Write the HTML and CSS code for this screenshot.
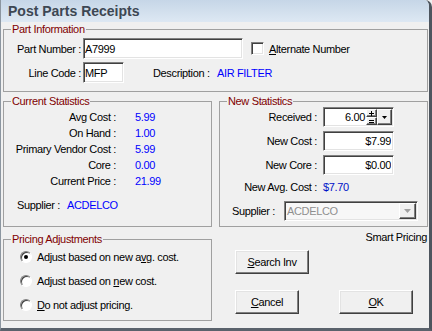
FILE: index.html
```html
<!DOCTYPE html>
<html lang="en">
<head>
    <meta charset="UTF-8">
    <title>Post Parts Receipts</title>
    <link rel="stylesheet" href="styles.css">
</head>
<body>
    <div class="window">
        <div class="titlebar">Post Parts Receipts</div>

        <div class="client">
            <!-- Part Information -->
            <fieldset class="group group-wide">
                <legend>Part Information</legend>
                <div class="part-row">
                    <span class="part-label">Part Number :</span>
                    <input class="field field-part" type="text" value="A7999">
                    <span class="checkbox"></span>
                    <span class="check-text"><u>A</u>lternate Number</span>
                </div>
                <div class="part-row part-row-2">
                    <span class="part-label">Line Code :</span>
                    <input class="field field-line" type="text" value="MFP">
                    <span class="desc-label">Description :</span>
                    <span class="value">AIR FILTER</span>
                </div>
            </fieldset>

            <!-- Current Statistics -->
            <fieldset class="group">
                <legend>Current Statistics</legend>
                <div class="stats">
                    <span class="stat-label">Avg Cost :</span><span class="value">5.99</span>
                    <span class="stat-label">On Hand :</span><span class="value">1.00</span>
                    <span class="stat-label">Primary Vendor Cost :</span><span class="value">5.99</span>
                    <span class="stat-label">Core :</span><span class="value">0.00</span>
                    <span class="stat-label">Current Price :</span><span class="value">21.99</span>
                </div>
                <div class="cur-supplier">
                    <span class="cur-supplier-label">Supplier :</span>
                    <span class="value">ACDELCO</span>
                </div>
            </fieldset>

            <!-- New Statistics -->
            <fieldset class="group">
                <legend>New Statistics</legend>
                <div class="new-row">
                    <span class="new-label">Received :</span>
                    <div class="spin-box">
                        <span class="spin-text">6.00</span>
                        <div class="spin-buttons">
                            <span class="spin-btn">
                                <svg width="5" height="5" viewBox="0 0 5 5"><path d="M2 0h1v2h2v1H3v2H2V3H0V2h2z" fill="#000"/></svg>
                            </span>
                            <span class="spin-btn">
                                <svg width="5" height="3" viewBox="0 0 5 3"><path d="M0 0h5v1H0zM0 2h5v1H0z" fill="#000"/></svg>
                            </span>
                        </div>
                        <span class="drop-btn">
                            <svg width="5" height="3" viewBox="0 0 5 3"><path d="M0 0h5L2.5 3z" fill="#000"/></svg>
                        </span>
                    </div>
                </div>
                <div class="new-row">
                    <span class="new-label">New Cost :</span>
                    <input class="field field-money" type="text" value="$7.99">
                </div>
                <div class="new-row">
                    <span class="new-label">New Core :</span>
                    <input class="field field-money" type="text" value="$0.00">
                </div>
                <div class="new-row new-row-avg">
                    <span class="new-label">New Avg. Cost :</span>
                    <span class="value value-dark">$7.70</span>
                </div>
                <div class="new-supplier">
                    <span class="new-supplier-label">Supplier :</span>
                    <div class="combo">
                        <span class="combo-text">ACDELCO</span>
                        <span class="drop-btn drop-btn-off">
                            <svg width="7" height="4" viewBox="0 0 7 4"><path d="M0 0h7L3.5 4z" fill="#a0a0a0"/></svg>
                        </span>
                    </div>
                </div>
            </fieldset>

            <!-- Pricing Adjustments -->
            <fieldset class="group group-pricing">
                <legend>Pricing Adjustments</legend>
                <div class="radio-list">
                    <div class="radio-row"><span class="radio radio-on"></span><span>Adjust based on new a<u>v</u>g. cost.</span></div>
                    <div class="radio-row"><span class="radio"></span><span>Adjust based on <u>n</u>ew cost.</span></div>
                    <div class="radio-row"><span class="radio"></span><span><u>D</u>o not adjust pricing.</span></div>
                </div>
            </fieldset>

            <!-- Buttons -->
            <div class="actions">
                <div class="smart">Smart Pricing</div>
                <button class="btn btn-search"><u>S</u>earch Inv</button>
                <div class="btn-row">
                    <button class="btn btn-cancel"><u>C</u>ancel</button>
                    <button class="btn btn-ok"><u>O</u>K</button>
                </div>
            </div>
        </div>
    </div>
</body>
</html>
```

FILE: styles.css
```css
body {
    margin: 0;
    font-family: "Liberation Sans", Arial, sans-serif;
    font-size: 11px;
    letter-spacing: -0.35px;
    color: #000;
    background: #f0f0f0;
}

/* Window frame */
.window {
    width: 432px;
    height: 331px;
    box-sizing: border-box;
    border-left: 1px solid #8c96a0;
    border-right: 3px solid #4d555e;
    border-bottom: 3px solid #5a626c;
    border-top-right-radius: 7px;
    background: #f0f0f0;
    overflow: hidden;
}

.titlebar {
    height: 22px;
    padding-left: 7px;
    line-height: 23px;
    font-size: 14px;
    font-weight: bold;
    letter-spacing: 0;
    color: #3d4753;
    background: linear-gradient(to bottom, #c6d6e7, #dde8f3);
}

.client {
    display: grid;
    grid-template-columns: 209px 209px;
    column-gap: 7px;
    padding: 1px 0 0 2px;
}

/* Group boxes */
.group {
    margin: 0;
    padding: 0;
    min-width: 0;
    border: 1px solid #a0a0a0;
}

.group legend {
    margin-left: 7px;
    padding: 0 1px;
    line-height: 12px;
    color: #800000;
}

.group-wide {
    grid-column: 1 / 3;
    padding: 3px 0 8px 0;
    margin-bottom: 3px;
}

.value {
    color: #0000ff;
}

.value-dark {
    color: #0010c8;
}

/* Sunken edit fields */
.field {
    box-sizing: border-box;
    height: 21px;
    margin: 0;
    padding: 0 1px;
    font-family: inherit;
    font-size: 11px;
    letter-spacing: -0.35px;
    color: #000;
    background: #fff;
    border: 1px solid;
    border-color: #808080 #fff #fff #808080;
    box-shadow: inset 1px 1px 0 #404040, inset -1px -1px 0 #e3e3e3;
    outline: none;
}

/* Part information rows */
.part-row {
    display: flex;
    align-items: center;
}

.part-row-2 {
    margin-top: 3px;
}

.part-label {
    width: 77px;
    margin-right: 2px;
    text-align: right;
}

.field-part {
    width: 160px;
}

.field-line {
    width: 41px;
}

.checkbox {
    box-sizing: border-box;
    width: 13px;
    height: 13px;
    margin-left: 8px;
    background: #fff;
    border: 1px solid;
    border-color: #808080 #fff #fff #808080;
    box-shadow: inset 1px 1px 0 #404040, inset -1px -1px 0 #e3e3e3;
}

.check-text {
    margin-left: 5px;
}

.desc-label {
    width: 64px;
    margin-left: 29px;
}

/* Current statistics */
.stats {
    display: grid;
    grid-template-columns: 112px auto;
    column-gap: 19px;
    padding-top: 2px;
    line-height: 16px;
}

.stat-label {
    text-align: right;
}

.cur-supplier {
    display: flex;
    margin-top: 8px;
    padding: 0 0 13px 13px;
    line-height: 16px;
}

.cur-supplier-label {
    width: 50px;
}

/* New statistics */
.new-row {
    display: flex;
    align-items: center;
    height: 20px;
    margin-bottom: 4px;
}

.new-row-avg {
    height: 16px;
    margin: 2px 0 6px 0;
}

.new-label {
    width: 97px;
    margin-right: 6px;
    text-align: right;
}

.field-money {
    width: 71px;
    height: 20px;
    padding-right: 2px;
    text-align: right;
}

.spin-box {
    box-sizing: border-box;
    display: flex;
    width: 71px;
    height: 20px;
    background: #fff;
    border: 1px solid;
    border-color: #808080 #fff #fff #808080;
    box-shadow: inset 1px 1px 0 #404040, inset -1px -1px 0 #e3e3e3;
    padding: 1px;
}

.spin-text {
    flex: 1;
    padding-right: 1px;
    text-align: right;
    line-height: 17px;
}

.spin-buttons {
    display: flex;
    flex-direction: column;
    width: 11px;
}

.spin-btn,
.drop-btn {
    box-sizing: border-box;
    display: flex;
    align-items: center;
    justify-content: center;
    background: #f0f0f0;
    border: 1px solid;
    border-color: #fff #404040 #404040 #fff;
    box-shadow: inset -1px -1px 0 #808080;
}

.spin-btn {
    height: 8px;
}

.drop-btn {
    width: 15px;
}

.drop-btn-off {
    width: 17px;
}

.new-supplier {
    display: flex;
    align-items: center;
    padding: 0 0 4px 12px;
}

.new-supplier-label {
    width: 52px;
}

.combo {
    box-sizing: border-box;
    display: flex;
    width: 134px;
    height: 20px;
    padding: 1px;
    background: #f7f7f7;
    border: 1px solid;
    border-color: #808080 #fff #fff #808080;
    box-shadow: inset 1px 1px 0 #404040, inset -1px -1px 0 #e3e3e3;
}

.combo-text {
    flex: 1;
    padding-left: 1px;
    line-height: 17px;
    color: #8f8f8f;
}

/* Pricing adjustments */
.group-pricing {
    margin-top: 6px;
    height: 88px;
    box-sizing: border-box;
}

.radio-list {
    padding: 4px 0 0 16px;
}

.radio-row {
    display: flex;
    align-items: center;
    height: 16px;
    margin-bottom: 8px;
}

.radio {
    box-sizing: border-box;
    position: relative;
    width: 12px;
    height: 12px;
    margin-right: 5px;
    border-radius: 50%;
    background: #fff;
    border: 1px solid;
    border-color: #808080 #fff #fff #808080;
    box-shadow: inset 1px 1px 0 #404040;
}

.radio-on::after {
    content: "";
    position: absolute;
    left: 3px;
    top: 3px;
    width: 4px;
    height: 4px;
    border-radius: 50%;
    background: #000;
}

/* Buttons */
.actions {
    display: flex;
    flex-direction: column;
    align-items: flex-start;
}

.smart {
    align-self: stretch;
    margin-top: 2px;
    padding-right: 1px;
    line-height: 16px;
    text-align: right;
}

.btn {
    box-sizing: border-box;
    height: 24px;
    margin: 0;
    padding: 0;
    font-family: inherit;
    font-size: 11px;
    letter-spacing: -0.35px;
    color: #000;
    background: #f0f0f0;
    border: 1px solid;
    border-color: #fff #404040 #404040 #fff;
    box-shadow: inset -1px -1px 0 #808080, inset 1px 1px 0 #e3e3e3;
}

.btn-search {
    width: 74px;
    margin: 5px 0 0 16px;
}

.btn-row {
    display: flex;
    margin: 16px 0 0 16px;
}

.btn-cancel {
    width: 64px;
}

.btn-ok {
    width: 74px;
    margin-left: 40px;
}
```
